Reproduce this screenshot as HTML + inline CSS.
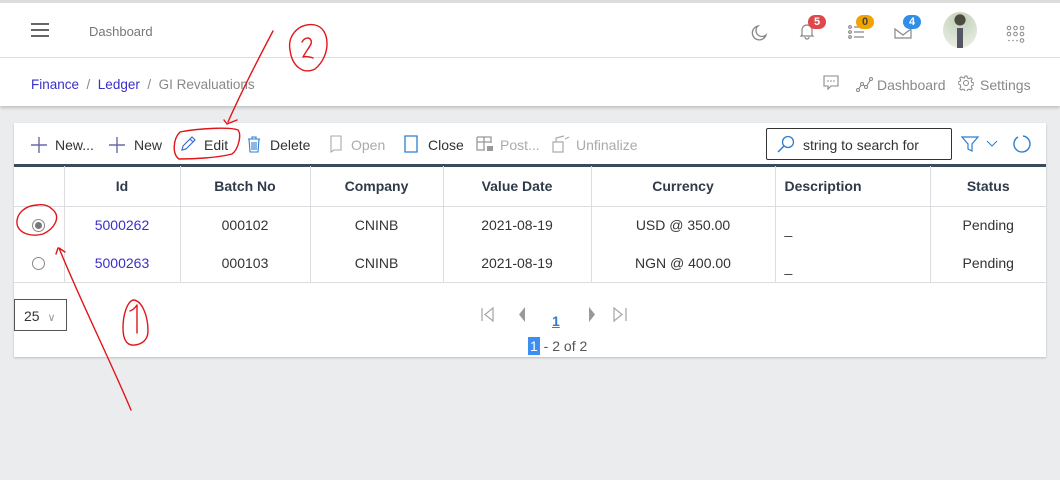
<!DOCTYPE html>
<html><head><meta charset="utf-8"><style>
*{box-sizing:border-box;margin:0;padding:0}
body{width:1060px;height:480px;overflow:hidden;background:#ebecee;font-family:"Liberation Sans",sans-serif;position:relative;color:#333}
.abs{position:absolute}
.hdr{left:0;top:0;width:1060px;height:58px;background:#fff;border-top:3px solid #dcdcdc;border-bottom:1px solid #dedede}
.bc{left:0;top:58px;width:1060px;height:48px;background:#fff;box-shadow:0 2px 3px rgba(0,0,0,.18)}
.t{font-size:14px;white-space:nowrap}
.card{left:14px;top:123px;width:1032px;height:234px;background:#fff;box-shadow:0 1px 2px rgba(0,0,0,.2)}
.badge{position:absolute;height:14px;border-radius:7px;font-size:11px;font-weight:bold;color:#fff;text-align:center;line-height:14px;width:18px}
table{position:absolute;left:14px;top:166px;width:1032px;border-collapse:collapse;font-size:14px}
th{height:40px;font-weight:bold;color:#2f3a4a;border-right:1px solid #dcdde0;border-bottom:1px solid #dcdde0}
td{height:38px;text-align:center;color:#333;border-right:1px solid #dcdde0}
th:last-child,td:last-child{border-right:none}
tr.last td{border-bottom:1px solid #dcdde0;height:38px}
a{color:#3b2fc7;text-decoration:none}
.dis{color:#aaa}
</style></head><body>
<div class="abs hdr"></div>
<div class="abs" style="left:31px;top:23px;width:18px;height:2px;background:#666;box-shadow:0 6px 0 #666,0 12px 0 #666"></div>
<div class="abs t" style="left:89px;top:24px;color:#777;font-size:13px">Dashboard</div>
<svg class="abs" style="left:748px;top:24px" width="20" height="20" viewBox="0 0 20 20"><path d="M10 2a7 7 0 1 0 8 9a6 6 0 0 1-8-9z" fill="none" stroke="#888" stroke-width="1.3"/></svg>
<svg class="abs" style="left:798px;top:22px" width="18" height="18" viewBox="0 0 18 18"><path d="M4 13V8a5 5 0 0 1 10 0v5l1 1H3zM7 15a2 2 0 0 0 4 0" fill="none" stroke="#888" stroke-width="1.2"/></svg>
<div class="badge" style="left:808px;top:15px;background:#e0474c">5</div>
<svg class="abs" style="left:848px;top:24px" width="18" height="16" viewBox="0 0 18 16"><g fill="none" stroke="#888" stroke-width="1.2"><circle cx="2" cy="3" r="1.3"/><circle cx="2" cy="8" r="1.3"/><circle cx="2" cy="13" r="1.3"/><path d="M6 3h10M6 8h10M6 13h10"/></g></svg>
<div class="badge" style="left:856px;top:15px;background:#f0a400;color:#444">0</div>
<svg class="abs" style="left:894px;top:25px" width="18" height="14" viewBox="0 0 18 14"><path d="M1 4l8 6 8-6v9H1z" fill="none" stroke="#888" stroke-width="1.2"/></svg>
<div class="badge" style="left:903px;top:15px;background:#2f8fe8">4</div>
<div class="abs" style="left:943px;top:12px;width:34px;height:36px;border-radius:50%;background:radial-gradient(circle at 50% 22%,#4a4a40 0 16%,#c8d4c0 18%,#dde5d6 60%,#eef1ea);"></div>
<div class="abs" style="left:957px;top:28px;width:6px;height:20px;background:#556"></div>
<svg class="abs" style="left:1006px;top:25px" width="20" height="20" viewBox="0 0 20 20"><g fill="none" stroke="#888" stroke-width="1"><circle cx="3" cy="3" r="1.8"/><circle cx="9.5" cy="3" r="1.8"/><circle cx="16" cy="3" r="1.8"/><circle cx="3" cy="9" r="1.8"/><circle cx="9.5" cy="9" r="1.8"/><circle cx="16" cy="9" r="1.8"/><circle cx="16" cy="15.5" r="1.8"/></g><g fill="#888"><circle cx="3" cy="15.5" r=".8"/><circle cx="7" cy="15.5" r=".8"/><circle cx="11" cy="15.5" r=".8"/></g></svg>

<div class="abs bc"></div>
<div class="abs t" style="left:31px;top:77px;font-size:13.5px"><a>Finance</a><span style="color:#888"> &nbsp;/&nbsp; </span><a>Ledger</a><span style="color:#888"> &nbsp;/&nbsp; GI Revaluations</span></div>
<svg class="abs" style="left:823px;top:75px" width="16" height="16" viewBox="0 0 16 16"><path d="M1 1h14v10H8l-3 3v-3H1z" fill="none" stroke="#888" stroke-width="1.1"/><g fill="#888"><circle cx="5" cy="6" r=".8"/><circle cx="8" cy="6" r=".8"/><circle cx="11" cy="6" r=".8"/></g></svg>
<svg class="abs" style="left:856px;top:76px" width="18" height="16" viewBox="0 0 18 16"><path d="M2 14l4-6 4 3 5-8" fill="none" stroke="#888" stroke-width="1.1"/><g fill="#fff" stroke="#888"><circle cx="2" cy="14" r="1.5"/><circle cx="6" cy="8" r="1.5"/><circle cx="10" cy="11" r="1.5"/><circle cx="15" cy="3" r="1.5"/></g></svg>
<div class="abs t" style="left:877px;top:77px;color:#888">Dashboard</div>
<svg class="abs" style="left:958px;top:75px" width="16" height="16" viewBox="0 0 16 16"><circle cx="8" cy="8" r="2.5" fill="none" stroke="#888"/><path d="M7 1h2l.5 2 1.5.7 1.8-1 1.4 1.4-1 1.8.7 1.5 2 .5v2l-2 .5-.7 1.5 1 1.8-1.4 1.4-1.8-1-1.5.7-.5 2H7l-.5-2-1.5-.7-1.8 1-1.4-1.4 1-1.8L2.1 9.5 0 9V7l2-.5.7-1.5-1-1.8 1.4-1.4 1.8 1L6.5 3z" fill="none" stroke="#888"/></svg>
<div class="abs t" style="left:980px;top:77px;color:#888">Settings</div>

<div class="abs card"></div>
<div class="abs" style="left:14px;top:164px;width:1032px;height:3px;background:#3c4a5e"></div>
<svg class="abs" style="left:30px;top:136px" width="18" height="18" viewBox="0 0 18 18"><path d="M9 1v16M1 9h16" stroke="#6a6aa8" stroke-width="1.4"/></svg>
<div class="abs t" style="left:55px;top:137px">New...</div>
<svg class="abs" style="left:108px;top:136px" width="18" height="18" viewBox="0 0 18 18"><path d="M9 1v16M1 9h16" stroke="#6a6aa8" stroke-width="1.4"/></svg>
<div class="abs t" style="left:134px;top:137px">New</div>
<svg class="abs" style="left:179px;top:135px" width="18" height="18" viewBox="0 0 18 18"><path d="M3 15l1-4 9-9 3 3-9 9zM11 4l3 3" fill="none" stroke="#3a6ec8" stroke-width="1.2"/></svg>
<div class="abs t" style="left:204px;top:137px">Edit</div>
<svg class="abs" style="left:246px;top:135px" width="16" height="18" viewBox="0 0 16 18"><path d="M2 4h12M6 4V2h4v2M3 4l1 13h8l1-13M6 7v8M8 7v8M10 7v8" fill="none" stroke="#2a7fd0" stroke-width="1.1"/></svg>
<div class="abs t" style="left:270px;top:137px">Delete</div>
<svg class="abs" style="left:328px;top:135px" width="16" height="18" viewBox="0 0 16 18"><path d="M3 1h10v14H6l-3 2zM3 1v16" fill="none" stroke="#aaa" stroke-width="1.1"/></svg>
<div class="abs t dis" style="left:351px;top:137px">Open</div>
<svg class="abs" style="left:404px;top:135px" width="14" height="18" viewBox="0 0 14 18"><path d="M1 1h12v16H1z" fill="none" stroke="#2a7fd0" stroke-width="1.3"/></svg>
<div class="abs t" style="left:428px;top:137px">Close</div>
<svg class="abs" style="left:476px;top:136px" width="18" height="16" viewBox="0 0 18 16"><path d="M1 1h14v6M1 1v13h8M1 6h14M8 1v13" fill="none" stroke="#999" stroke-width="1.3"/><rect x="11" y="10" width="6" height="5" fill="#999"/></svg>
<div class="abs t dis" style="left:500px;top:137px">Post...</div>
<svg class="abs" style="left:551px;top:135px" width="20" height="18" viewBox="0 0 20 18"><path d="M2 7h10v10H2zM5 7V3l8-2M14 4l4-2" fill="none" stroke="#aaa" stroke-width="1.2"/></svg>
<div class="abs t dis" style="left:576px;top:137px">Unfinalize</div>
<div class="abs" style="left:766px;top:128px;width:186px;height:32px;border:1px solid #333;border-radius:2px"></div>
<svg class="abs" style="left:776px;top:135px" width="20" height="18" viewBox="0 0 20 18"><circle cx="12" cy="7" r="5.5" fill="none" stroke="#2a7fd0" stroke-width="1.3"/><path d="M8 11l-6 6" stroke="#2a7fd0" stroke-width="1.5"/></svg>
<div class="abs t" style="left:803px;top:137px">string to search for</div>
<svg class="abs" style="left:961px;top:135px" width="40" height="18" viewBox="0 0 40 18"><path d="M1 2h16l-6 7v7l-4-2V9z" fill="none" stroke="#2a7fd0" stroke-width="1.2"/><path d="M26 6l5 5 5-5" fill="none" stroke="#2a7fd0"/></svg>
<svg class="abs" style="left:1012px;top:134px" width="20" height="20" viewBox="0 0 20 20"><path d="M6 3a8 8 0 1 0 5-1" fill="none" stroke="#2a7fd0" stroke-width="1.4"/></svg>

<table>
<tr><th style="width:50px"></th><th style="width:116px">Id</th><th style="width:130px">Batch No</th><th style="width:133px">Company</th><th style="width:148px">Value Date</th><th style="width:184px">Currency</th><th style="width:155px;text-align:left;padding-left:9px">Description</th><th>Status</th></tr>
<tr><td><span style="display:inline-block;width:13px;height:13px;border:1px solid #888;border-radius:50%;position:relative;top:2px"><span style="position:absolute;left:2px;top:2px;width:7px;height:7px;border-radius:50%;background:#777"></span></span></td><td><a>5000262</a></td><td>000102</td><td>CNINB</td><td>2021-08-19</td><td>USD @ 350.00</td><td style="text-align:left;padding-left:9px;padding-top:8px">_</td><td>Pending</td></tr>
<tr class="last"><td><span style="display:inline-block;width:13px;height:13px;border:1px solid #888;border-radius:50%;position:relative;top:2px"></span></td><td><a>5000263</a></td><td>000103</td><td>CNINB</td><td>2021-08-19</td><td>NGN @ 400.00</td><td style="text-align:left;padding-left:9px;padding-top:8px">_</td><td>Pending</td></tr>
</table>

<div class="abs" style="left:14px;top:299px;width:53px;height:32px;border:1px solid #555;font-size:14px;padding:8px 0 0 9px">25 <span style="color:#999;font-size:11px;margin-left:4px">&#8744;</span></div>
<svg class="abs" style="left:480px;top:306px" width="156" height="18" viewBox="0 0 156 18"><g fill="none" stroke="#aaa" stroke-width="1.3"><path d="M2 2v13M13 2L5 8.5 13 15z"/><path d="M134 2l8 6.5-8 6.5zM146 2v13"/></g><path d="M45 1L39 8.5 45 16z" fill="#999"/><path d="M109 1l6 7.5-6 7.5z" fill="#999"/></svg>
<div class="abs" style="left:552px;top:313px;font-size:14px;font-weight:bold;color:#2a7fd0;text-decoration:underline">1</div>
<div class="abs" style="left:528px;top:338px;font-size:14px;color:#555"><span style="background:#3b8ff0;color:#fff;padding:1px 2px">1</span> - 2 of 2</div>

<svg class="abs" style="left:0;top:0" width="1060" height="480" viewBox="0 0 1060 480"><g fill="none" stroke="#e0161a" stroke-width="1.4" stroke-linecap="round" stroke-linejoin="round">
<path d="M273 31C255 65 240 95 228 122M224 120l3 4 10-4"/>
<path d="M290 50c-3-15 10-28 25-25 15 3 17 30 0 44-12 6-23-3-25-19zM302 42c3-6 11-5 9 2-2 4-6 9-8 13 3-1 7 0 10 1"/>
<path d="M180 132c20-4 50-5 58-2 4 5 0 20-6 24-15 4-40 5-53 5-7-5-6-20 1-27z"/>
<path d="M38 205c-12 0-22 8-21 19 2 10 15 13 26 10 11-5 19-17 9-25-4-4-9-5-15-4"/>
<path d="M131 410C110 360 80 300 59 248M58 248l-2 6M59 248l6 4"/>
<path d="M133 300c-6 2-10 15-10 28 0 12 4 18 12 17 8-1 13-6 13-14 0-15-6-31-15-31zM130 311c3-1 5-3 7-6v28"/>
</g></svg>
</body></html>
